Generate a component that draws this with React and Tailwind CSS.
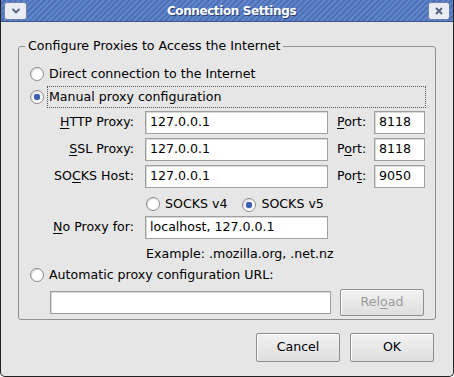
import React from 'react';

function Radio({ checked }) {
  return (
    <span className="relative inline-flex h-[14px] w-[14px] shrink-0 items-center justify-center rounded-full border border-[#8a8a8a] bg-white shadow-[inset_1px_1px_1px_rgba(0,0,0,0.15)]">
      {checked && <span className="h-[6px] w-[6px] rounded-full bg-[#3c63b3] shadow-[0_0_1px_#223f80]" />}
    </span>
  );
}

function Field({ value, className = '' }) {
  return (
    <div className={`flex h-[23px] items-center border border-[#a0a0a0] bg-white pl-[4px] text-black shadow-[inset_1px_1px_0_#d8d8d8] ${className}`}>
      {value}
    </div>
  );
}

function Button({ children, disabled, className = '' }) {
  return (
    <div className={`flex items-center justify-center border border-[#8e8e8e] rounded-[2px] bg-gradient-to-b from-[#f2f2f2] to-[#dedede] shadow-[inset_1px_1px_0_#fff] ${disabled ? 'text-[#9a9a9a]' : 'text-black'} ${className}`}>
      {children}
    </div>
  );
}

function ProxyRow({ mnemonic, rest, pre = '', port, portMn }) {
  return (
    <div className="flex items-center">
      <div className="w-[115px] pr-[11px] text-right">
        {pre}<span className="underline underline-offset-2">{mnemonic}</span>{rest}
      </div>
      <Field value="127.0.0.1" className="w-[183px]" />
      <div className="ml-[9px] w-[37px]">
        {portMn === 0 ? (
          <><span className="underline underline-offset-2">P</span>ort:</>
        ) : portMn === 1 ? (
          <>P<span className="underline underline-offset-2">o</span>rt:</>
        ) : (
          <>Por<span className="underline underline-offset-2">t</span>:</>
        )}
      </div>
      <Field value={port} className="w-[51px]" />
    </div>
  );
}

export default function App() {
  return (
    <div className="flex h-[377px] w-[454px] flex-col overflow-hidden rounded-b-[5px] border-x border-b border-[#222] bg-[#e6e6e6] font-['DejaVu_Sans',sans-serif] text-[12.6px] text-black">
      {/* title bar */}
      <div className="flex h-[22px] shrink-0 items-center border-b border-[#3a5690] bg-[repeating-linear-gradient(135deg,#6085ca_0px,#6085ca_2px,#4d70b6_2px,#4d70b6_4px)] px-[3px]">
        <div className="flex h-[18px] w-[23px] items-center justify-center rounded-[3px] border border-[#6d7fa6] bg-[#e9ecf2]">
          <svg width="10" height="6" viewBox="0 0 10 6"><path d="M1.5 1 L5 4.5 L8.5 1" fill="none" stroke="#56657f" strokeWidth="1.8" /></svg>
        </div>
        <div className="flex-1 pl-[8px] text-center text-[12px] font-bold tracking-[-0.4px] text-white [text-shadow:1px_1px_0_#2a4277]">Connection Settings</div>
        <div className="flex h-[18px] w-[22px] items-center justify-center rounded-[3px] border border-[#6d7fa6] bg-[#e9ecf2]">
          <svg width="8" height="8" viewBox="0 0 8 8"><path d="M1 1 L7 7 M7 1 L1 7" stroke="#56657f" strokeWidth="2" /></svg>
        </div>
      </div>

      <div className="flex flex-1 flex-col px-[17px] pt-[16px]">
        <fieldset className="rounded-[3px] border border-[#8f8f8f] pb-[3px] pl-[11px] pr-[9px]">
          <legend className="ml-[-5px] px-[3px] leading-[16px]">Configure Proxies to Access the Internet</legend>

          <div className="mt-[10px] flex h-[20px] items-center gap-[5px]">
            <Radio />
            <span>Direct connection to the Internet</span>
          </div>

          <div className="mt-[2px] flex h-[22px] items-center gap-[3px]">
            <Radio checked />
            <span className="flex h-[22px] flex-1 items-center border border-dotted border-[#555] pl-[1px]">Manual proxy configuration</span>
          </div>

          <div className="mt-[3px] flex flex-col gap-[4px]">
            <ProxyRow mnemonic="H" rest="TTP Proxy:" port="8118" portMn={0} />
            <ProxyRow mnemonic="S" rest="SL Proxy:" port="8118" portMn={1} />
            <ProxyRow pre="SO" mnemonic="C" rest="KS Host:" port="9050" portMn={2} />
          </div>

          <div className="mt-[5px] flex h-[22px] items-center pl-[116px]">
            <Radio />
            <span className="ml-[5px]">SOCKS v4</span>
            <span className="ml-[15px]"><Radio checked /></span>
            <span className="ml-[5px]">SOCKS v5</span>
          </div>

          <div className="mt-[1px] flex items-center">
            <div className="w-[115px] pr-[11px] text-right">
              <span className="underline underline-offset-2">N</span>o Proxy for:
            </div>
            <Field value="localhost, 127.0.0.1" className="w-[183px]" />
          </div>

          <div className="mt-[6px] h-[18px] pl-[116px] leading-[18px]">Example: .mozilla.org, .net.nz</div>

          <div className="mt-[2px] flex h-[20px] items-center gap-[5px]">
            <Radio />
            <span>Automatic proxy configuration URL:</span>
          </div>

          <div className="mt-[4px] flex items-center pl-[20px]">
            <Field value="" className="w-[281px]" />
            <Button disabled className="ml-[9px] h-[27px] w-[84px]">
              Rel<span className="underline underline-offset-2">o</span>ad
            </Button>
          </div>
        </fieldset>

        <div className="mt-[13px] flex justify-end gap-[10px] pr-[2px]">
          <Button className="h-[29px] w-[84px]">Cancel</Button>
          <Button className="h-[29px] w-[84px]">OK</Button>
        </div>
      </div>
    </div>
  );
}
